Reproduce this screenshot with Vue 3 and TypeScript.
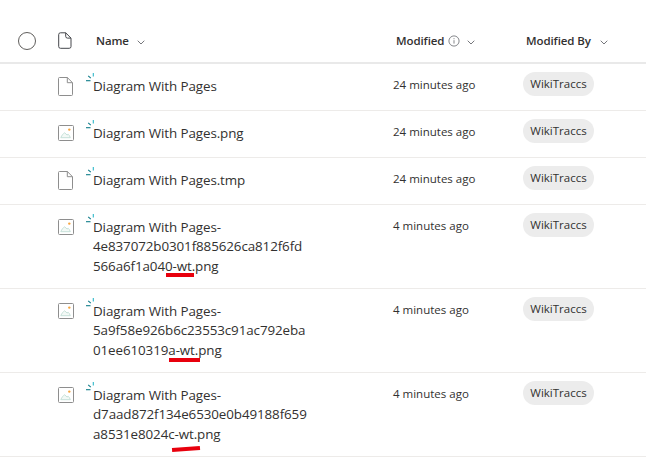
<script setup lang="ts">
interface Row {
  lines: string[];
  kind: "file" | "image";
  modified: string;
  mark?: { left: number; width: number; top: number; tilt: number };
}

const rows: Row[] = [
  { lines: ["Diagram With Pages"], kind: "file", modified: "24 minutes ago" },
  { lines: ["Diagram With Pages.png"], kind: "image", modified: "24 minutes ago" },
  { lines: ["Diagram With Pages.tmp"], kind: "file", modified: "24 minutes ago" },
  {
    lines: ["Diagram With Pages-", "4e837072b0301f885626ca812f6fd", "566a6f1a040-wt.png"],
    kind: "image",
    modified: "4 minutes ago",
    mark: { left: 73, width: 28, top: 60, tilt: 0 },
  },
  {
    lines: ["Diagram With Pages-", "5a9f58e926b6c23553c91ac792eba", "01ee610319a-wt.png"],
    kind: "image",
    modified: "4 minutes ago",
    mark: { left: 76, width: 31, top: 61, tilt: 0 },
  },
  {
    lines: ["Diagram With Pages-", "d7aad872f134e6530e0b49188f659", "a8531e8024c-wt.png"],
    kind: "image",
    modified: "4 minutes ago",
    mark: { left: 79, width: 28, top: 65.6, tilt: -4 },
  },
];
</script>

<template>
  <div class="list">
    <div class="head">
      <span class="c-check"><span class="circle"></span></span>
      <span class="c-icon">
        <svg class="head-doc" width="14" height="17" viewBox="0 0 14 17" fill="none" stroke="#44464b" stroke-width="1">
          <path d="M2.500.8h5.200l5.300 5.300v8.400a1.800 1.800 0 0 1-1.800 1.800H2.500A1.800 1.800 0 0 1 .7 14.500v-11.900A1.800 1.800 0 0 1 2.500.8z" />
          <path d="M7.700.8v3.500a1.800 1.800 0 0 0 1.800 1.800h3.500" />
        </svg>
      </span>
      <span class="c-name hcell">
        Name
        <svg class="chev name-chev" width="8" height="5" viewBox="0 0 8 5"><path d="M.7.7 4 4l3.300-3.300" /></svg>
      </span>
      <span class="c-mod hcell">
        Modified
        <svg class="info" width="12" height="12" viewBox="0 0 12 12" fill="none" stroke="#66686d" stroke-width=".8">
          <circle cx="6" cy="6" r="5.100" />
          <path d="M6 5.200v3.400M6 3.200v1" />
        </svg>
        <svg class="chev mod-chev" width="8" height="5" viewBox="0 0 8 5"><path d="M.7.7 4 4l3.300-3.300" /></svg>
      </span>
      <span class="c-by hcell">
        Modified By
        <svg class="chev by-chev" width="8" height="5" viewBox="0 0 8 5"><path d="M.7.7 4 4l3.300-3.300" /></svg>
      </span>
    </div>

    <div v-for="(row, i) in rows" :key="i" class="row">
      <span class="c-check"></span>
      <span class="c-icon row-icon">
        <svg v-if="row.kind === 'file'" class="doc" width="15" height="19" viewBox="0 0 15 19" fill="#fff" stroke="#8e8e8e">
          <path d="M1.500.5h7.800l5.200 5.200v11.800a1 1 0 0 1-1 1h-12a1 1 0 0 1-1-1v-16a1 1 0 0 1 1-1z" />
          <path d="M9.300.5v5.200h5.200" fill="none" />
        </svg>
        <svg v-else width="16" height="16" viewBox="0 0 16 16" fill="#fff">
          <rect x=".5" y=".5" width="15" height="15" rx="1" stroke="#8e8e8e" />
          <path d="M2.800 12.700c1-2.300 2.300-4 3.800-4.900 1 .7 1.700 1.400 2.400 2.300l1.100-.9c1 .8 1.900 2 2.200 3.500z" fill="#f3f9f6" stroke="#b9d9cf" stroke-width=".8" />
          <circle cx="11.300" cy="4.600" r="1.200" fill="#f5a53f" />
        </svg>
      </span>
      <span class="c-name name">
        <svg class="spark" width="9" height="9" viewBox="0 0 9 9" fill="none" stroke-width="1.100">
          <path d="M0 7.700h4.500" stroke="#0f7c8a" />
          <path d="M2.200 2.900 4.800 5.100" stroke="#0f7c8a" />
          <path d="M7.300 0v3.500" stroke="#2cb8c9" />
        </svg>
        <span v-for="line in row.lines" :key="line" class="line">{{ line }}</span>
        <span
          v-if="row.mark"
          class="mark"
          :style="{ left: row.mark.left + 'px', top: row.mark.top + 'px', width: row.mark.width + 'px', transform: `rotate(${row.mark.tilt}deg)` }"
        ></span>
      </span>
      <span class="c-mod when">{{ row.modified }}</span>
      <span class="c-by"><span class="pill">WikiTraccs</span></span>
    </div>
  </div>
</template>

<style scoped>
.list {
  width: 646px;
  height: 459px;
  overflow: hidden;
  background: #fff;
  font-family: "Open Sans", "Noto Sans", sans-serif;
  color: #323130;
}
.head,
.row {
  display: grid;
  grid-template-columns: 58px 35px 300px 130px 1fr;
}
.head {
  padding-top: 30px;
  height: 32px;
  border-bottom: 2px solid #e9e9e9;
  align-items: start;
}
.hcell {
  font-size: 11.5px;
  font-weight: 600;
  line-height: 22px;
  color: #323130;
  letter-spacing: -0.1px;
  white-space: nowrap;
}
.head .c-name,
.head .c-mod,
.head .c-by {
  padding-left: 3px;
}
.head .c-check {
  padding-left: 18px;
}
.circle {
  display: block;
  width: 16px;
  height: 16px;
  border: 1px solid #605e5c;
  border-radius: 50%;
  margin-top: 2px;
}
.head-doc {
  display: block;
  margin-top: 2px;
}
.chev {
  fill: none;
  stroke: #66686d;
  stroke-width: 0.9;
}
.name-chev {
  margin-left: 5px;
}
.mod-chev {
  margin-left: 7px;
}
.by-chev {
  margin-left: 6px;
}
.info {
  margin-left: 1px;
  vertical-align: -2px;
}
.row {
  box-sizing: border-box;
  min-height: 47px;
  padding: 8px 0 12px;
  border-bottom: 1px solid #edebe9;
  font-size: 13.4px;
}
.row-icon {
  padding-top: 6px;
}
.row-icon svg {
  display: block;
}
.row-icon .doc {
  margin-top: -1px;
}
.name {
  position: relative;
  display: flex;
  flex-direction: column;
  padding-top: 5px;
  line-height: 19.33px;
  letter-spacing: -0.1px;
  white-space: nowrap;
}
.spark {
  position: absolute;
  left: -7px;
  top: 1px;
}
.mark {
  position: absolute;
  height: 3.7px;
  background: #e8000d;
}
.when {
  font-size: 11.5px;
  line-height: 20px;
  padding-top: 3px;
  white-space: nowrap;
}
.pill {
  display: block;
  width: 71px;
  height: 24px;
  line-height: 24px;
  border-radius: 12px;
  background: #ececec;
  color: #323130;
  font-size: 11.5px;
  text-align: center;
}
</style>

<style>
html,
body {
  margin: 0;
  background: #fff;
}
</style>
